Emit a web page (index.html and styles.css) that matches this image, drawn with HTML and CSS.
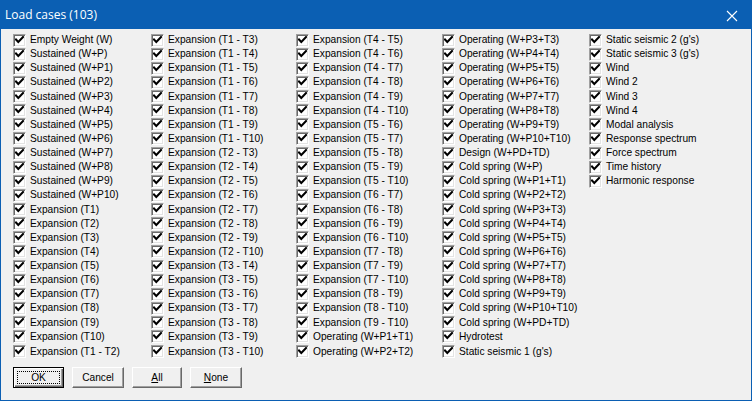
FILE: index.html
```html
<!DOCTYPE html>
<html>
<head>
<meta charset="utf-8">
<link rel="stylesheet" href="styles.css">
</head>
<body>
<div class="window">
  <div class="titlebar">
    <span class="title">Load cases (103)</span>
    <svg class="close" width="12" height="12" viewBox="0 0 12 12"><path d="M1 1L11 11M11 1L1 11" stroke="#fff" stroke-width="1.1" fill="none"/></svg>
  </div>
  <div class="content">
    <div class="grid" id="grid"></div>
    <div class="buttons">
      <button class="btn default"><span class="focus">OK</span></button>
      <button class="btn">Cancel</button>
      <button class="btn"><u>A</u>ll</button>
      <button class="btn"><u>N</u>one</button>
    </div>
  </div>
</div>
<script src="app.js"></script>
</body>
</html>
```

FILE: app.js
```js
const cols = [];
const c1 = ["Empty Weight (W)", "Sustained (W+P)"];
for (let i = 1; i <= 10; i++) c1.push("Sustained (W+P" + i + ")");
for (let i = 1; i <= 10; i++) c1.push("Expansion (T" + i + ")");
c1.push("Expansion (T1 - T2)");
const pairs = [];
for (let a = 1; a <= 10; a++) for (let b = a + 1; b <= 10; b++) if (!(a === 1 && b === 2)) pairs.push("Expansion (T" + a + " - T" + b + ")");
const c2 = pairs.slice(0, 23);
const c3 = pairs.slice(23);
c3.push("Operating (W+P1+T1)", "Operating (W+P2+T2)");
const c4 = [];
for (let i = 3; i <= 10; i++) c4.push("Operating (W+P" + i + "+T" + i + ")");
c4.push("Design (W+PD+TD)", "Cold spring (W+P)");
for (let i = 1; i <= 10; i++) c4.push("Cold spring (W+P" + i + "+T" + i + ")");
c4.push("Cold spring (W+PD+TD)", "Hydrotest", "Static seismic 1 (g's)");
const c5 = ["Static seismic 2 (g's)", "Static seismic 3 (g's)", "Wind", "Wind 2", "Wind 3", "Wind 4", "Modal analysis", "Response spectrum", "Force spectrum", "Time history", "Harmonic response"];
const grid = document.getElementById("grid");
const check = '<span class="box"><svg width="9" height="9" viewBox="0 0 9 9"><path d="M1 3.5L3.3 6L8 1" stroke="#000" stroke-width="2" fill="none" stroke-linecap="square"/></svg></span>';
[c1, c2, c3, c4, c5].forEach(list => {
  const col = document.createElement("div");
  col.className = "col";
  list.forEach((t, i) => {
    const r = document.createElement("div");
    r.className = "row" + (i === 22 ? " last" : "");
    r.innerHTML = check + '<span class="label"></span>';
    r.querySelector(".label").textContent = t;
    col.appendChild(r);
  });
  grid.appendChild(col);
});
```

FILE: styles.css
```css
html, body {
  margin: 0;
  padding: 0;
}
body {
  width: 752px;
  height: 401px;
  overflow: hidden;
  background: #f0f0f0;
}
.window {
  box-sizing: border-box;
  width: 752px;
  height: 401px;
  border: 1px solid #0b5fb3;
  border-top: 0;
  background: #f0f0f0;
  display: flex;
  flex-direction: column;
}
.titlebar {
  height: 29px;
  background: #0b5fb3;
  display: flex;
  align-items: center;
  justify-content: space-between;
  padding: 0 13px 0 4px;
  color: #fff;
  font-family: "Open Sans", "Noto Sans", sans-serif;
  font-size: 12px;
}
.title {
  margin-top: -1px;
}
.close {
  display: block;
  margin-top: 2px;
}
.content {
  padding: 4px 0 0 12px;
  font-family: "Liberation Sans", Arial, sans-serif;
  font-size: 10.2px;
  color: #000;
}
.grid {
  display: grid;
  grid-template-columns: 138px 145px 146px 147px 1fr;
}
.col {
  display: flex;
  flex-direction: column;
}
.row {
  height: 14.14px;
  display: flex;
  align-items: center;
  white-space: nowrap;
}
.row.last {
  margin-top: 1px;
}
.box {
  box-sizing: border-box;
  width: 13px;
  height: 13px;
  flex: none;
  background: #fff;
  border-top: 1px solid #a0a0a0;
  border-left: 1px solid #a0a0a0;
  border-right: 1px solid #fff;
  border-bottom: 1px solid #fff;
  box-shadow: inset 1px 1px 0 #696969, inset -1px -1px 0 #e3e3e3;
  display: flex;
  align-items: center;
  justify-content: center;
  margin-right: 4px;
}
.box svg {
  display: block;
}
.label {
  line-height: 12px;
}
.buttons {
  display: flex;
  gap: 8px;
  margin-top: 8px;
  padding-left: 0;
}
.btn {
  box-sizing: border-box;
  height: 21px;
  width: 51px;
  padding: 0;
  background: #f0f0f0;
  font-family: "Liberation Sans", Arial, sans-serif;
  font-size: 10.2px;
  color: #000;
  border-top: 1px solid #fff;
  border-left: 1px solid #fff;
  border-right: 1px solid #696969;
  border-bottom: 1px solid #696969;
  box-shadow: inset -1px -1px 0 #a0a0a0;
  border-radius: 0;
}
.btn:nth-child(2) {
  width: 52px;
}
.btn:nth-child(3) {
  width: 50px;
}
.btn:nth-child(4) {
  width: 52px;
}
.btn.default {
  border: 1px solid #000;
  box-shadow: inset 1px 1px 0 #fff, inset -1px -1px 0 #696969, inset -2px -2px 0 #a0a0a0;
  display: flex;
  align-items: center;
  justify-content: center;
  padding: 3px;
}
.focus {
  display: block;
  width: 100%;
  height: 100%;
  box-sizing: border-box;
  border: 1px dotted #000;
  line-height: 11px;
}
```
